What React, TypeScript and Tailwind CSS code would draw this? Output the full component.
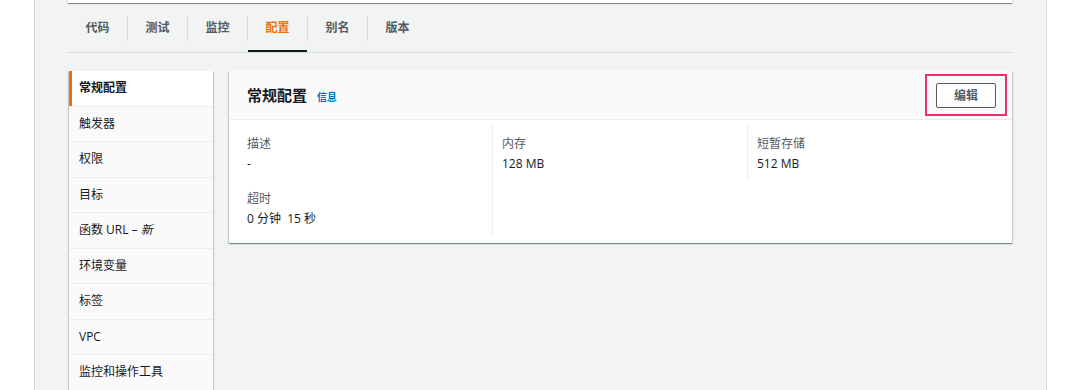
const tabs = ['代码', '测试', '监控', '配置', '别名', '版本'];
const activeTab = '配置';

const navItems = ['常规配置', '触发器', '权限', '目标', '函数 URL', '环境变量', '标签', 'VPC', '监控和操作工具'];

const cardShadow =
  'shadow-[0_1px_1px_0_rgba(0,28,36,0.3),1px_1px_1px_0_rgba(0,28,36,0.15),-1px_1px_1px_0_rgba(0,28,36,0.15)]';

function Field({ label, value, className = '' }: { label: string; value: string; className?: string }) {
  return (
    <div className={className}>
      <div className="text-[12px] leading-[20px] text-[#545b64]">{label}</div>
      <div className="text-[12px] leading-[20px] text-[#16191f] whitespace-pre">{value}</div>
    </div>
  );
}

export default function App() {
  return (
    <div
      className="w-[1080px] h-[390px] overflow-hidden bg-white"
      style={{ fontFamily: '"Open Sans", "Noto Sans CJK SC", sans-serif' }}
    >
      <div className="ml-[34px] w-[1013px] h-full bg-[#f2f3f3] border-x border-[#d5d8d8] pl-[33px] pr-[34px]">
        <div className={`h-[3px] bg-white ${cardShadow}`} />

        {/* tabs */}
        <div className="flex items-center border-b border-[#d5dbdb] mt-px">
          {tabs.map((tab, i) => (
            <div key={tab} className="flex items-center">
              {i > 0 && <div className="w-px h-[25px] bg-[#d5dbdb]" />}
              <div className="relative w-[59px] h-[48px] flex items-center justify-center">
                <span
                  className={`text-[12px] font-bold ${tab === activeTab ? 'text-[#ec7211]' : 'text-[#545b64]'}`}
                >
                  {tab}
                </span>
                {tab === activeTab && <span className="absolute left-0 right-0 bottom-0 h-[2px] bg-[#16191f]" />}
              </div>
            </div>
          ))}
        </div>

        <div className="flex gap-[16px] mt-[18px] items-start">
          {/* side nav */}
          <div className={`ml-px w-[144px] shrink-0 bg-[#fafafa] pb-[20px] ${cardShadow}`}>
            {navItems.map((item, i) => (
              <div
                key={item}
                className={`relative h-[35.5px] flex items-center pl-[10px] border-b border-[#eaeded] text-[12px] text-[#16191f] ${
                  i === 0 ? 'bg-white font-bold' : ''
                }`}
              >
                {i === 0 && <span className="absolute left-0 top-0 bottom-0 w-[3px] bg-[#ec7211]" />}
                {item}
                {item === '函数 URL' && <span className="ml-[3px]">– <i>新</i></span>}
              </div>
            ))}
          </div>

          {/* general config card */}
          <div className={`flex-1 bg-white ${cardShadow}`}>
            <div className="h-[49px] flex items-center justify-between pl-[18px] pr-[5px] bg-[#fafafa] border-b border-[#eaeded]">
              <div className="flex items-baseline gap-[10px]">
                <h2 className="text-[15px] font-bold text-[#16191f]">常规配置</h2>
                <a className="text-[10px] font-bold text-[#0073bb]">信息</a>
              </div>
              <div className="border-2 border-[#e8336b] px-[9px] py-[6px]">
                <button className="w-[60px] h-[25px] border border-[#545b64] rounded-[2px] bg-white text-[12px] font-bold text-[#545b64]">
                  编辑
                </button>
              </div>
            </div>
            <div className="grid grid-cols-3 items-start px-[9px] pt-[3px] pb-[8px]">
              <div className="pl-[9px] pt-[11px] pb-[6px] border-r border-[#eaeded]">
                <Field label="描述" value="-" />
                <Field label="超时" value="0 分钟  15 秒" className="mt-[15px]" />
              </div>
              <div className="pl-[9px] pt-[11px] pb-[5px] border-r border-[#eaeded]">
                <Field label="内存" value="128 MB" />
              </div>
              <div className="pl-[9px] pt-[11px] pb-[5px]">
                <Field label="短暂存储" value="512 MB" />
              </div>
            </div>
          </div>
        </div>
      </div>
    </div>
  );
}
